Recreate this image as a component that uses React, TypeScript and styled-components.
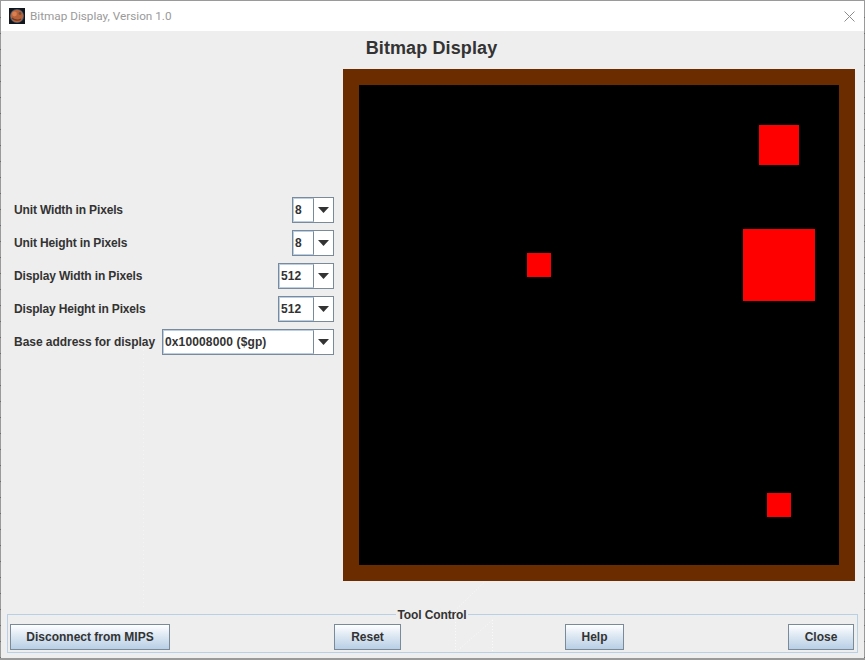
import React from 'react';
import styled, { createGlobalStyle } from 'styled-components';

const Global = createGlobalStyle`
  html, body { margin: 0; padding: 0; background: #eeeeee; }
  * { box-sizing: border-box; }
`;

const Frame = styled.div`
  position: relative;
  width: 865px;
  height: 660px;
  display: flex;
  flex-direction: column;
  background: #eeeeee;
  border: 1px solid #9a9a9a;
  border-bottom-width: 2px;
  font-family: "Liberation Sans", Arial, sans-serif;
`;

const TitleBar = styled.div`
  height: 30px;
  flex: none;
  background: #ffffff;
  display: flex;
  align-items: center;
  padding: 0 9px 0 8px;
  gap: 5px;
`;

const WindowTitle = styled.span`
  font-family: Roboto, "Noto Sans", sans-serif;
  font-size: 11.75px;
  color: #9a9a9a;
  flex: 1;
`;

const Body = styled.div`
  flex: 1;
  display: flex;
  flex-direction: column;
`;

const Heading = styled.h1`
  margin: 0;
  padding-right: 2px;
  height: 38px;
  flex: none;
  font-size: 18px;
  font-weight: 700;
  color: #333333;
  text-align: center;
  line-height: 34px;
  letter-spacing: 0.12px;
`;

const Main = styled.div`
  height: 512px;
  flex: none;
  display: flex;
`;

const Settings = styled.div`
  width: 342px;
  flex: none;
  display: flex;
  flex-direction: column;
  gap: 7px;
  padding: 128px 9px 0 13px;
`;

const Row = styled.div`
  height: 26px;
  display: flex;
  align-items: center;
  justify-content: space-between;
`;

const RowLabel = styled.label<{ $tracking: number }>`
  font-size: 12px;
  font-weight: 700;
  color: #333333;
  letter-spacing: ${(p) => p.$tracking}px;
`;

const Combo = styled.div<{ $width: number }>`
  width: ${(p) => p.$width}px;
  height: 26px;
  display: flex;
  background: #ffffff;
  border: 1px solid #7a8a99;
`;

const ComboValue = styled.div`
  flex: 1;
  display: flex;
  align-items: center;
  padding-left: 1px;
  font-size: 12px;
  font-weight: 700;
  letter-spacing: 0.13px;
  color: #333333;
  border: 1px solid #b8cfe5;
  border-right-color: #7a8a99;
`;

const ComboArrow = styled.div`
  width: 19px;
  flex: none;
  display: flex;
  align-items: center;
  justify-content: center;
`;

const Board = styled.div`
  width: 512px;
  height: 512px;
  flex: none;
  background: #6b2c00;
  padding: 16px;
`;

const Bitmap = styled.svg`
  display: block;
  width: 480px;
  height: 480px;
  background: #000000;
`;

const ToolControl = styled.fieldset`
  margin: 25px 0 0 6px;
  width: 851px;
  height: 47px;
  flex: none;
  padding: 2px 3px 0 2px;
  border: 1px solid #b8cfe5;
`;

const Legend = styled.legend`
  padding: 2px 2px 0;
  margin: 0 auto;
  font-size: 12px;
  font-weight: 700;
  letter-spacing: -0.12px;
  color: #333333;
  line-height: 14px;
`;

const Actions = styled.div`
  display: flex;
  justify-content: space-between;
  align-items: center;
  width: 100%;
`;

const ActionButton = styled.button<{ $width: number }>`
  width: ${(p) => p.$width}px;
  height: 26px;
  padding: 0;
  border: 1px solid #7a8a99;
  background: linear-gradient(#ffffff 0%, #dde8f3 45%, #b8cfe5 100%);
  font-family: inherit;
  font-size: 12px;
  font-weight: 700;
  color: #333333;
`;

const Artifacts = styled.svg`
  position: absolute;
  left: -1px;
  top: -1px;
  width: 865px;
  height: 660px;
  pointer-events: none;
`;

const rows = [
  { label: 'Unit Width in Pixels', value: '8', width: 42, tracking: -0.15 },
  { label: 'Unit Height in Pixels', value: '8', width: 42, tracking: -0.13 },
  { label: 'Display Width in Pixels', value: '512', width: 56, tracking: -0.13 },
  { label: 'Display Height in Pixels', value: '512', width: 56, tracking: -0.16 },
  { label: 'Base address for display', value: '0x10008000 ($gp)', width: 172, tracking: -0.04 },
];

const units = [
  { x: 400, y: 40, s: 40 },
  { x: 384, y: 144, s: 72 },
  { x: 168, y: 168, s: 24 },
  { x: 408, y: 408, s: 24 },
];

const edgeTicks = Array.from({ length: 41 }, (_, i) => 17 + i * 16)
  .filter((y) => y < 658)
  .map((y) => `M0 ${y + 0.5}h1M864 ${y + 0.5}h1`)
  .join('');

const MarsIcon = () => (
  <svg width="16" height="16" viewBox="0 0 16 16">
    <rect width="16" height="16" fill="#10161c" />
    <circle cx="8" cy="8" r="7" fill="#3d5a78" />
    <circle cx="8" cy="8" r="6.3" fill="#b8623a" />
    <circle cx="5.5" cy="6" r="2.4" fill="#d97f52" />
    <path d="M3 10c2 2 6 3 9 1" stroke="#6d3f2c" strokeWidth="1.4" fill="none" />
    <circle cx="11" cy="5.5" r="1.4" fill="#73503e" />
  </svg>
);

const CloseGlyph = () => (
  <svg width="11" height="11" viewBox="0 0 11 11">
    <path d="M.5.5l10 10M10.5.5l-10 10" stroke="#8c8c8c" strokeWidth="1" fill="none" />
  </svg>
);

const Arrow = () => (
  <svg width="11" height="6" viewBox="0 0 11 6">
    <path d="M0 0h11L5.5 6z" fill="#333333" />
  </svg>
);

export default function App() {
  return (
    <Frame>
      <Global />
      <TitleBar>
        <MarsIcon />
        <WindowTitle>Bitmap Display, Version 1.0</WindowTitle>
        <CloseGlyph />
      </TitleBar>
      <Body>
        <Heading>Bitmap Display</Heading>
        <Main>
          <Settings>
            {rows.map((r) => (
              <Row key={r.label}>
                <RowLabel $tracking={r.tracking}>{r.label}</RowLabel>
                <Combo $width={r.width}>
                  <ComboValue>{r.value}</ComboValue>
                  <ComboArrow>
                    <Arrow />
                  </ComboArrow>
                </Combo>
              </Row>
            ))}
          </Settings>
          <Board>
            <Bitmap viewBox="0 0 480 480">
              {units.map((u) => (
                <rect key={`${u.x}-${u.y}`} x={u.x} y={u.y} width={u.s} height={u.s} fill="#ff0000" />
              ))}
            </Bitmap>
          </Board>
        </Main>
        <ToolControl>
          <Legend>Tool Control</Legend>
          <Actions>
            <ActionButton $width={160}>Disconnect from MIPS</ActionButton>
            <ActionButton $width={67}>Reset</ActionButton>
            <ActionButton $width={59}>Help</ActionButton>
            <ActionButton $width={66}>Close</ActionButton>
          </Actions>
        </ToolControl>
      </Body>
      <Artifacts viewBox="0 0 865 660">
        <path d={edgeTicks} stroke="#6e6e6e" strokeWidth="1" fill="none" />
        <path d="M143.5 350V607" stroke="#f5f5f5" strokeWidth="1" strokeDasharray="1 3" fill="none" />
        <path
          d="M483.5 583L455.5 610V651M492.5 620V651M492.5 620L457 651"
          stroke="#f8fbf8"
          strokeWidth="1"
          strokeDasharray="1 2"
          fill="none"
        />
      </Artifacts>
    </Frame>
  );
}
